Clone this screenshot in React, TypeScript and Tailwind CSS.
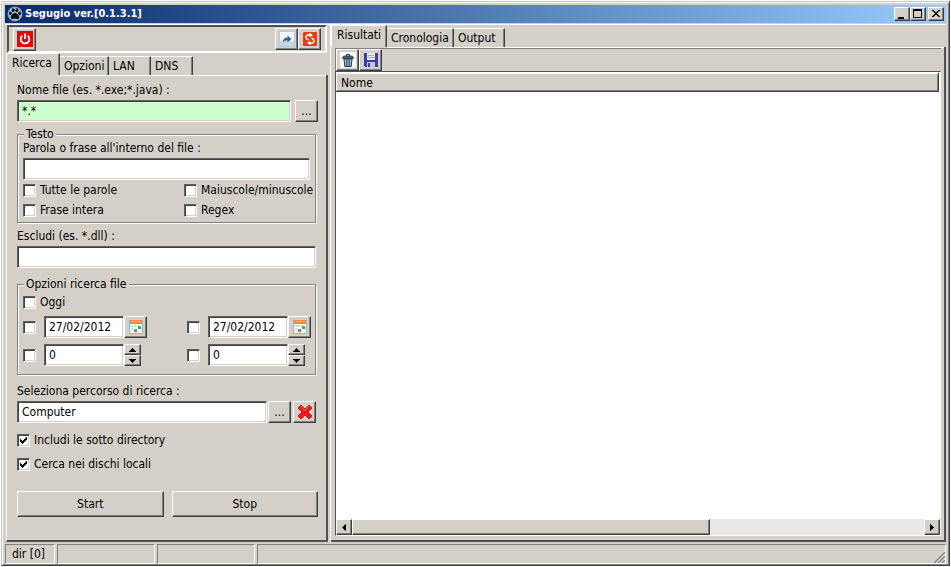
import type { ReactNode } from 'react'
import clsx from 'clsx'

const raised =
  'border border-t-white border-l-white border-r-[#404040] border-b-[#404040] shadow-[inset_-1px_-1px_0_#808080]'
const sunken =
  'border border-t-[#606060] border-l-[#606060] border-r-white border-b-white shadow-[inset_1px_1px_0_#404040,inset_-1px_-1px_0_#d4d0c8]'

interface ButtonProps {
  label: string
  className?: string
  children: ReactNode
}

function Button({ label, className, children }: ButtonProps) {
  return (
    <button
      type="button"
      aria-label={label}
      className={clsx('flex shrink-0 items-center justify-center bg-[#d4d0c8]', raised, className)}
    >
      {children}
    </button>
  )
}

interface TextFieldProps {
  id?: string
  label?: string
  value?: string
  className?: string
}

function TextField({ id, label, value = '', className }: TextFieldProps) {
  return (
    <input
      id={id}
      type="text"
      aria-label={label}
      defaultValue={value}
      className={clsx('h-[22px] min-w-0 px-1 outline-none', sunken, className)}
    />
  )
}

interface CheckProps {
  text?: string
  label?: string
  checked?: boolean
  className?: string
}

function Check({ text, label, checked, className }: CheckProps) {
  return (
    <label className={clsx('flex h-4 items-center gap-1', className)}>
      <span className="relative flex">
        <input
          type="checkbox"
          aria-label={label}
          defaultChecked={checked}
          className={clsx('peer size-[13px] appearance-none bg-white', sunken)}
        />
        <svg
          viewBox="0 0 13 13"
          className="pointer-events-none absolute inset-0 hidden size-[13px] peer-checked:block"
          shapeRendering="crispEdges"
        >
          <path
            d="M3 5h1v3h-1zM4 6h1v3h-1zM5 7h1v3h-1zM6 6h1v3h-1zM7 5h1v3h-1zM8 4h1v3h-1zM9 3h1v3h-1z"
            fill="#000"
          />
        </svg>
      </span>
      {text}
    </label>
  )
}

function Tab({ text, active, className }: { text: string; active?: boolean; className?: string }) {
  return (
    <button
      type="button"
      role="tab"
      aria-selected={!!active}
      className={clsx(
        'border-t border-t-white border-r border-r-[#404040] text-left shadow-[inset_-1px_0_0_#808080]',
        active ? 'h-[22px] border-l border-l-white pb-1 pl-[5px]' : 'h-[19px] pl-1',
        className,
      )}
    >
      {text}
    </button>
  )
}

function Group({ title, className, children }: { title: string; className?: string; children: ReactNode }) {
  return (
    <fieldset
      className={clsx(
        'mr-[2px] min-w-0 border border-[#808080] px-[5px] shadow-[1px_1px_0_#fff,inset_1px_1px_0_#fff]',
        className,
      )}
    >
      <legend className="ml-px bg-[#d4d0c8] px-[2px] leading-3">{title}</legend>
      {children}
    </fieldset>
  )
}

function DateField({ label }: { label: string }) {
  return (
    <div className="flex items-center">
      <Check label={`Usa ${label}`} className="w-[21px]" />
      <TextField label={label} value="27/02/2012" className="w-20 bg-white" />
      <Button label="Calendario" className="h-[22px] w-[23px]">
        <CalendarIcon />
      </Button>
    </div>
  )
}

function NumberField({ label }: { label: string }) {
  return (
    <div className="flex items-center">
      <Check label={`Usa ${label}`} className="w-[21px]" />
      <TextField label={label} value="0" className="w-20 bg-white" />
      <div className="flex flex-col">
        <Button label="Aumenta" className="h-[11px] w-[17px]">
          <svg viewBox="0 0 7 4" className="h-1 w-[7px]" shapeRendering="crispEdges">
            <path d="M3 0h1v1h1v1h1v1h1v1H0V3h1V2h1V1h1z" />
          </svg>
        </Button>
        <Button label="Diminuisci" className="h-[11px] w-[17px]">
          <svg viewBox="0 0 7 4" className="h-1 w-[7px]" shapeRendering="crispEdges">
            <path d="M0 0h7v1H6v1H5v1H4v1H3V3H2V2H1V1H0z" />
          </svg>
        </Button>
      </div>
    </div>
  )
}

function PawIcon() {
  return (
    <svg viewBox="0 0 16 16" className="size-4">
      <circle cx="8" cy="8" r="7.5" fill="#7f9bb3" />
      <circle cx="8" cy="8" r="6.5" fill="#a9bfd0" />
      <g fill="#0b1420">
        <ellipse cx="3.4" cy="7.4" rx="1.4" ry="1.8" />
        <ellipse cx="6.2" cy="4.2" rx="1.5" ry="2" />
        <ellipse cx="9.9" cy="4.2" rx="1.5" ry="2" />
        <ellipse cx="12.6" cy="7.4" rx="1.4" ry="1.8" />
        <path d="M8 7c2.200 0 4.200 2.500 4.200 4.300 0 1.500-1.300 2.100-2.400 1.800-1.200-.4-2.400-.4-3.600 0-1.100.3-2.400-.3-2.400-1.800C3.800 9.500 5.800 7 8 7z" />
      </g>
    </svg>
  )
}

function PowerIcon() {
  return (
    <svg viewBox="0 0 16 16" className="size-4">
      <rect width="16" height="16" fill="#e00a0a" />
      <path d="M5.300 4.800a4.300 4.300 0 1 0 5.400 0" fill="none" stroke="#fff" strokeWidth="1.800" />
      <path d="M8 2.500v5.500" stroke="#fff" strokeWidth="1.800" />
    </svg>
  )
}

function ShareIcon() {
  return (
    <svg viewBox="0 0 16 16" className="size-4">
      <rect x=".5" y=".5" width="15" height="15" fill="#f4f9fc" stroke="#b4cbdc" />
      <path d="M1 10h14v5H1z" fill="#c3d9e8" />
      <path d="M4 11.500c0-3.500 1.500-5 4.500-5V4.500L12.500 8l-4 3.500v-2c-2 0-3.300.5-4.500 2z" fill="#2f6690" />
    </svg>
  )
}

function RefreshIcon() {
  return (
    <svg viewBox="0 0 16 16" className="size-4">
      <rect x="1" y="1" width="14" height="14" rx="1" fill="#e8400c" />
      <g fill="none" stroke="#fff" strokeWidth="1.500">
        <path d="M8 3.800C5 3.500 3.800 5 4 6.500c.1 1.200 1 2 2.500 2.300" />
        <path d="M8 12.200c3 .3 4.200-1.200 4-2.700-.1-1.200-1-2-2.500-2.300" />
      </g>
      <path d="M7.500 1.800l3.500 2.400-3.500 2zM8.500 9.800v4.400L5 11.800z" fill="#fff" />
    </svg>
  )
}

function CalendarIcon() {
  return (
    <svg viewBox="0 0 16 16" className="size-4" shapeRendering="crispEdges">
      <rect x="1" y="1" width="14" height="14" fill="#fff" />
      <path d="M1 1h14v14H1zM2 2v12h12V2z" fill="#8fb4dc" fillRule="evenodd" />
      <rect x="2" y="1" width="12" height="4" fill="#f0883a" />
      <path d="M3 2h10v1H3z" fill="#f8b27c" />
      <path d="M3 6h2v2H3zM6 6h2v2H6zM9 6h2v2H9zM3 9h2v2H3zM3 12h2v1H3zM9 12h2v1H9zM12 9h1v2h-1z" fill="#c5d9f0" />
      <path d="M10 7h3v3h-3zM6 10h3v3H6z" fill="#5aa05a" />
    </svg>
  )
}

function TrashIcon() {
  return (
    <svg viewBox="0 0 16 16" className="size-4">
      <rect width="16" height="16" fill="#fff" />
      <path d="M6.500 4V2.500h3V4" fill="none" stroke="#1d3550" />
      <path d="M3.500 4h9l1 2.500h-11z" fill="#4a6680" stroke="#1d3550" strokeWidth=".8" />
      <path d="M4 7h8l-.8 7.500H4.800z" fill="#cfdce6" stroke="#1d3550" />
      <path d="M6.300 7.500v6.500M8 7.500v6.500M9.700 7.500v6.500" stroke="#1d3550" strokeWidth=".9" />
    </svg>
  )
}

function SaveIcon() {
  return (
    <svg viewBox="0 0 16 16" className="size-4" shapeRendering="crispEdges">
      <path d="M1 1h13l1 1v13H2l-1-1z" fill="#3d3da8" />
      <path d="M4 1h8v7H4z" fill="#e6e6f4" />
      <path d="M5 3h6v1H5zM5 5h6v1H5z" fill="#a8a8d0" />
      <path d="M4 10h8v5H4z" fill="#c6c6de" />
      <path d="M5 11h2v4H5z" fill="#3d3da8" />
    </svg>
  )
}

function DeleteIcon() {
  return (
    <svg viewBox="0 0 16 16" className="size-4">
      <path
        d="M4 1l4 4 4-4 3 3-4 4 4 4-3 3-4-4-4 4-3-3 4-4-4-4z"
        fill="#f01818"
        stroke="#b80000"
        strokeWidth=".8"
        strokeLinejoin="round"
      />
      <path d="M4 2.200l4 4 4-4" fill="none" stroke="#ff7a6a" />
    </svg>
  )
}

function TitleBar() {
  return (
    <header className="flex h-[18px] items-center bg-linear-to-r/srgb from-[#062a6c] to-[#99ccff] px-[2px] text-white">
      <PawIcon />
      <h1 className="ml-[2px] flex-1 text-[11px] font-bold">Segugio ver.[0.1.3.1]</h1>
      <Button label="Riduci a icona" className="h-[14px] w-4 text-black">
        <svg viewBox="0 0 12 10" className="h-[10px] w-3" shapeRendering="crispEdges">
          <path d="M2 8h6v2H2z" />
        </svg>
      </Button>
      <Button label="Ingrandisci" className="h-[14px] w-4 text-black">
        <svg viewBox="0 0 12 10" className="h-[10px] w-3" shapeRendering="crispEdges">
          <path d="M1 0h9v9H1zM2 2v6h7V2z" fillRule="evenodd" />
        </svg>
      </Button>
      <Button label="Chiudi" className="ml-[2px] h-[14px] w-4 text-black">
        <svg viewBox="0 0 12 10" className="h-[10px] w-3" shapeRendering="crispEdges">
          <path d="M2 1h2v1h1v1h2V2h1V1h2v1H9v1H8v1H7v1h1v1h1v1h1v1H8V7H7V6H5v1H4v1H2V7h1V6h1V5h1V4H4V3H3V2H2z" />
        </svg>
      </Button>
    </header>
  )
}

function SearchPanel() {
  return (
    <section className="flex w-[322px] shrink-0 flex-col">
      <div className="mx-px flex h-7 items-center border-2 border-t-[#505050] border-r-white border-b-white border-l-[#505050] px-1">
        <Button label="Esci" className="h-[23px] w-[23px]">
          <PowerIcon />
        </Button>
        <Button label="Apri" className="ml-auto h-[22px] w-[23px]">
          <ShareIcon />
        </Button>
        <Button label="Aggiorna" className="h-[22px] w-[23px]">
          <RefreshIcon />
        </Button>
      </div>
      <div role="tablist" className="flex h-[22px] items-end">
        <Tab text="Ricerca" active className="w-[54px]" />
        <Tab text="Opzioni" className="w-[49px]" />
        <Tab text="LAN" className="w-[42px]" />
        <Tab text="DNS" className="w-[42px]" />
      </div>
      <div className="flex flex-1 flex-col border-r-2 border-b-2 border-l border-r-[#505050] border-b-[#505050] border-l-white">
        <div className="ml-[52px] h-px bg-white" />
        <div className="flex flex-1 flex-col pt-[6px] pr-2 pl-[10px]">
          <label htmlFor="nome">Nome file (es. *.exe;*.java) :</label>
          <div className="mt-[2px] flex gap-1">
            <TextField id="nome" value="*.*" className="flex-1 bg-[#ccffcc]" />
            <Button label="Sfoglia file" className="h-[22px] w-[23px]">
              ...
            </Button>
          </div>

          <Group title="Testo" className="mt-[6px] pb-1">
            <label htmlFor="testo" className="block">
              Parola o frase all'interno del file :
            </label>
            <TextField id="testo" className="mt-[2px] w-full bg-white" />
            <div className="mt-[2px] grid grid-cols-[161px_1fr] gap-y-1 whitespace-nowrap">
              <Check text="Tutte le parole" />
              <Check text="Maiuscole/minuscole" />
              <Check text="Frase intera" />
              <Check text="Regex" />
            </div>
          </Group>

          <label htmlFor="escludi" className="mt-[5px]">
            Escludi (es. *.dll) :
          </label>
          <TextField id="escludi" className="mt-[2px] mr-[2px] bg-white" />

          <Group title="Opzioni ricerca file" className="mt-[10px] pt-1 pb-2">
            <Check text="Oggi" />
            <div className="mt-[6px] grid grid-cols-[164px_1fr] gap-y-[6px]">
              <DateField label="Data iniziale" />
              <DateField label="Data finale" />
              <NumberField label="Dimensione minima" />
              <NumberField label="Dimensione massima" />
            </div>
          </Group>

          <label htmlFor="percorso" className="mt-2">
            Seleziona percorso di ricerca :
          </label>
          <div className="mt-[2px] mr-[2px] flex">
            <TextField id="percorso" value="Computer" className="flex-1 bg-white" />
            <Button label="Sfoglia percorso" className="ml-px h-[22px] w-[23px]">
              ...
            </Button>
            <Button label="Cancella percorso" className="ml-[2px] h-[22px] w-[23px]">
              <DeleteIcon />
            </Button>
          </div>

          <Check text="Includi le sotto directory" checked className="mt-[9px]" />
          <Check text="Cerca nei dischi locali" checked className="mt-2" />

          <div className="mt-[19px] flex gap-2">
            <Button label="Start" className="h-[26px] flex-1">
              Start
            </Button>
            <Button label="Stop" className="h-[26px] flex-1">
              Stop
            </Button>
          </div>
        </div>
      </div>
    </section>
  )
}

function ResultsPanel() {
  return (
    <section className="ml-[2px] flex min-w-0 flex-1 flex-col border-l border-l-white">
      <div role="tablist" className="flex h-[22px] items-end">
        <Tab text="Risultati" active className="w-[56px]" />
        <Tab text="Cronologia" className="w-[67px]" />
        <Tab text="Output" className="w-[51px]" />
      </div>
      <div className="flex flex-1 flex-col border-r-2 border-b-2 border-r-[#505050] border-b-[#505050]">
        <div className="ml-[55px] h-px bg-white" />
        <div className="flex flex-1 flex-col pr-[3px] pb-1 pl-1">
          <div className="flex border-t border-l border-[#808080]">
            <Button label="Svuota" className="h-[22px] w-[23px]">
              <TrashIcon />
            </Button>
            <Button label="Salva" className="h-[22px] w-[23px]">
              <SaveIcon />
            </Button>
          </div>
          <div className="flex flex-1 flex-col border border-t-[#505050] border-r-white border-b-white border-l-[#505050] bg-white">
            <div className="flex-1 pt-px pr-px">
              <table className="w-full">
                <thead>
                  <tr>
                    <th
                      scope="col"
                      className={clsx('h-[18px] bg-[#d4d0c8] px-1 py-0 text-left font-normal', raised)}
                    >
                      Nome
                    </th>
                  </tr>
                </thead>
              </table>
            </div>
            <div className="flex h-4 bg-[#eae8e4]">
              <Button label="Scorri a sinistra" className="h-4 w-4">
                <svg viewBox="0 0 4 7" className="h-[7px] w-1" shapeRendering="crispEdges">
                  <path d="M4 0v7H3V6H2V5H1V4H0V3h1V2h1V1h1V0z" />
                </svg>
              </Button>
              <div className="flex-1">
                <div className={clsx('h-4 w-5/8 bg-[#d4d0c8]', raised)} />
              </div>
              <Button label="Scorri a destra" className="h-4 w-4">
                <svg viewBox="0 0 4 7" className="h-[7px] w-1" shapeRendering="crispEdges">
                  <path d="M0 0h1v1h1v1h1v1h1v1H3v1H2v1H1v1H0z" />
                </svg>
              </Button>
            </div>
          </div>
        </div>
      </div>
    </section>
  )
}

function StatusBar() {
  const cell = 'border border-t-[#808080] border-l-[#808080] border-r-white border-b-white'
  return (
    <footer className="mt-[2px] flex h-5 gap-[2px]">
      <div className={clsx('w-[50px] px-[6px] leading-[18px]', cell)}>dir [0]</div>
      <div className={clsx('w-[98px]', cell)} />
      <div className={clsx('w-[98px]', cell)} />
      <div className={clsx('flex flex-1 items-end justify-end', cell)}>
        <svg viewBox="0 0 12 12" className="size-3">
          <path d="M0 12L12 0M4 12l8-8M8 12l4-4" stroke="#fff" />
          <path d="M1 12L12 1M5 12l7-7M9 12l3-3" stroke="#808080" strokeWidth="1.500" />
        </svg>
      </div>
    </footer>
  )
}

export default function App() {
  return (
    <div className="flex min-h-screen bg-white p-px font-['DejaVu_Sans_Condensed','DejaVu_Sans',sans-serif] text-[12px] leading-4 text-black">
      <div className="flex flex-1 flex-col border border-t-[#c8c4bc] border-r-[#404040] border-b-[#404040] border-l-[#c8c4bc] bg-[#d4d0c8] p-[3px] pb-px shadow-[inset_1px_1px_0_#fff,inset_-1px_-1px_0_#808080]">
        <TitleBar />
        <main className="mt-px flex flex-1 border-t border-t-white pl-px">
          <SearchPanel />
          <ResultsPanel />
        </main>
        <StatusBar />
      </div>
    </div>
  )
}
